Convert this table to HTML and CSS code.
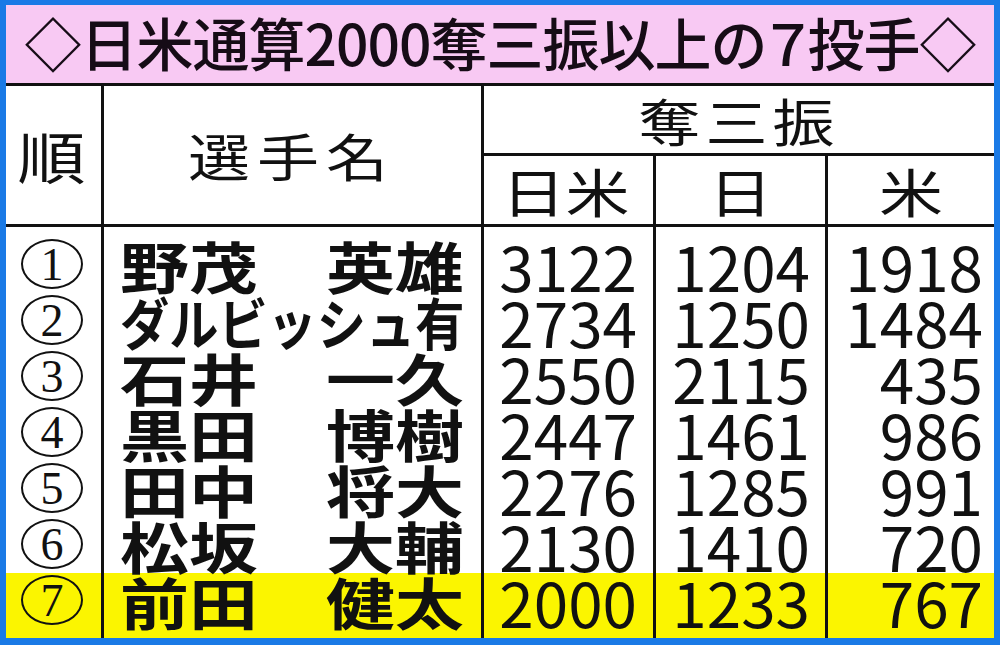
FILE: index.html
```html
<!DOCTYPE html>
<html lang="ja">
<head>
<meta charset="utf-8">
<title>日米通算2000奪三振以上の７投手</title>
<link rel="stylesheet" href="styles.css">
</head>
<body>
<div class="frame">
  <div class="title"><span class="title-text">◇日米通算2000奪三振以上の<span class="seven">７</span>投手◇</span></div>
  <div class="head">
    <div class="h h-rank"><span class="flat">順</span></div>
    <div class="h h-name"><span class="flat">選手名</span></div>
    <div class="h h-so"><span class="flat">奪三振</span></div>
    <div class="h h-sub"><span class="flat">日米</span></div>
    <div class="h h-sub"><span class="flat">日</span></div>
    <div class="h h-sub"><span class="flat">米</span></div>
  </div>
  <div class="body">
    <div class="row first">
      <div class="c rank"><span class="circ">1</span></div>
      <div class="c name"><span class="nm">野茂</span><span class="nm">英雄</span></div>
      <div class="c num n1">3122</div>
      <div class="c num n2">1204</div>
      <div class="c num n3">1918</div>
    </div>
    <div class="row">
      <div class="c rank"><span class="circ">2</span></div>
      <div class="c name"><span class="nm kana">ダルビッシュ有</span></div>
      <div class="c num n1">2734</div>
      <div class="c num n2">1250</div>
      <div class="c num n3">1484</div>
    </div>
    <div class="row">
      <div class="c rank"><span class="circ">3</span></div>
      <div class="c name"><span class="nm">石井</span><span class="nm">一久</span></div>
      <div class="c num n1">2550</div>
      <div class="c num n2">2115</div>
      <div class="c num n3">435</div>
    </div>
    <div class="row">
      <div class="c rank"><span class="circ">4</span></div>
      <div class="c name"><span class="nm">黒田</span><span class="nm">博樹</span></div>
      <div class="c num n1">2447</div>
      <div class="c num n2">1461</div>
      <div class="c num n3">986</div>
    </div>
    <div class="row">
      <div class="c rank"><span class="circ">5</span></div>
      <div class="c name"><span class="nm">田中</span><span class="nm">将大</span></div>
      <div class="c num n1">2276</div>
      <div class="c num n2">1285</div>
      <div class="c num n3">991</div>
    </div>
    <div class="row">
      <div class="c rank"><span class="circ">6</span></div>
      <div class="c name"><span class="nm">松坂</span><span class="nm">大輔</span></div>
      <div class="c num n1">2130</div>
      <div class="c num n2">1410</div>
      <div class="c num n3">720</div>
    </div>
    <div class="row hl">
      <div class="c rank"><span class="circ">7</span></div>
      <div class="c name"><span class="nm">前田</span><span class="nm">健太</span></div>
      <div class="c num n1">2000</div>
      <div class="c num n2">1233</div>
      <div class="c num n3">767</div>
    </div>
  </div>
</div>
</body>
</html>
```

FILE: styles.css
```css
* { box-sizing: border-box; }
html, body { margin: 0; padding: 0; }
body {
  width: 1000px;
  height: 645px;
  overflow: hidden;
  font-family: "Noto Sans CJK JP", "Noto Sans", sans-serif;
  color: #111;
}
.frame {
  width: 1000px;
  height: 645px;
  background: #1a7ae6;
  padding: 5px 6px 7px 6px;
  display: flex;
  flex-direction: column;
}
.title {
  height: 81px;
  flex: none;
  background: #f8c9f3;
  border-bottom: 3px solid #111;
  display: flex;
  align-items: center;
  justify-content: center;
  font-size: 57px;
  font-weight: 500;
  color: #160c16;
  line-height: 1;
  white-space: nowrap;
  letter-spacing: -1px;
}
.title-text { display: inline-block; transform: translateY(-3px); }
.seven { letter-spacing: -9px; margin-left: -7px; }

.head {
  flex: none;
  display: grid;
  grid-template-columns: 95px 380px 172px 172px 169px;
  grid-template-rows: 70px 68px;
  background: #fff;
  border-bottom: 3px solid #111;
  height: 141px;
}
.h {
  display: flex;
  align-items: center;
  justify-content: center;
  font-size: 64px;
  font-weight: 400;
  line-height: 1;
}
.flat { display: inline-block; transform: scaleY(0.82); }
.h-rank { grid-row: 1 / 3; grid-column: 1; font-size: 68px; padding-right: 4px; }
.h-name { grid-row: 1 / 3; grid-column: 2; border-left: 3px solid #111; letter-spacing: 7px; font-size: 62px; padding-right: 2px; }
.h-so { grid-row: 1; grid-column: 3 / 6; border-left: 3px solid #111; border-bottom: 3px solid #111; letter-spacing: 5px; font-size: 62px; }
.h-sub { grid-row: 2; border-left: 3px solid #111; }
.h-sub:nth-child(4) { padding-right: 6px; }

.body {
  flex: 1;
  display: flex;
  flex-direction: column;
  background: #fff;
}
.row {
  display: grid;
  grid-template-columns: 95px 380px 172px 172px 169px;
  height: 56px;
  flex: none;
}
.row.first { height: 66px; }
.row.first .c { padding-top: 10px; }
.row.hl { flex: 1; height: auto; background: #fbf500; }
.row.hl .c { padding-bottom: 10px; }
.c {
  display: flex;
  align-items: center;
  line-height: 50px;
}
.c + .c { border-left: 3px solid #111; }
.rank { justify-content: center; padding-right: 3px; }
.circ {
  display: inline-flex;
  align-items: center;
  justify-content: center;
  width: 62px;
  height: 50px;
  border: 2.5px solid #111;
  border-radius: 50%;
  font-family: "Liberation Serif", serif;
  font-size: 46px;
  line-height: 1;
  padding-top: 2px;
  margin-top: -2px;
}
.name {
  justify-content: space-between;
  padding-left: 16px;
  padding-right: 17px;
}
.nm {
  display: inline-block;
  font-size: 69px;
  font-weight: 700;
  line-height: 50px;
  transform: scaleY(0.8);
  white-space: nowrap;
  flex: none;
}
.nm.kana {
  transform: scale(0.713, 0.8);
  transform-origin: left center;
}
.num {
  justify-content: flex-end;
  font-size: 62px;
  font-weight: 400;
  line-height: 50px;
}
.n1 { padding-right: 16px; }
.n2 { padding-right: 15px; }
.n3 { padding-right: 11px; }
```
